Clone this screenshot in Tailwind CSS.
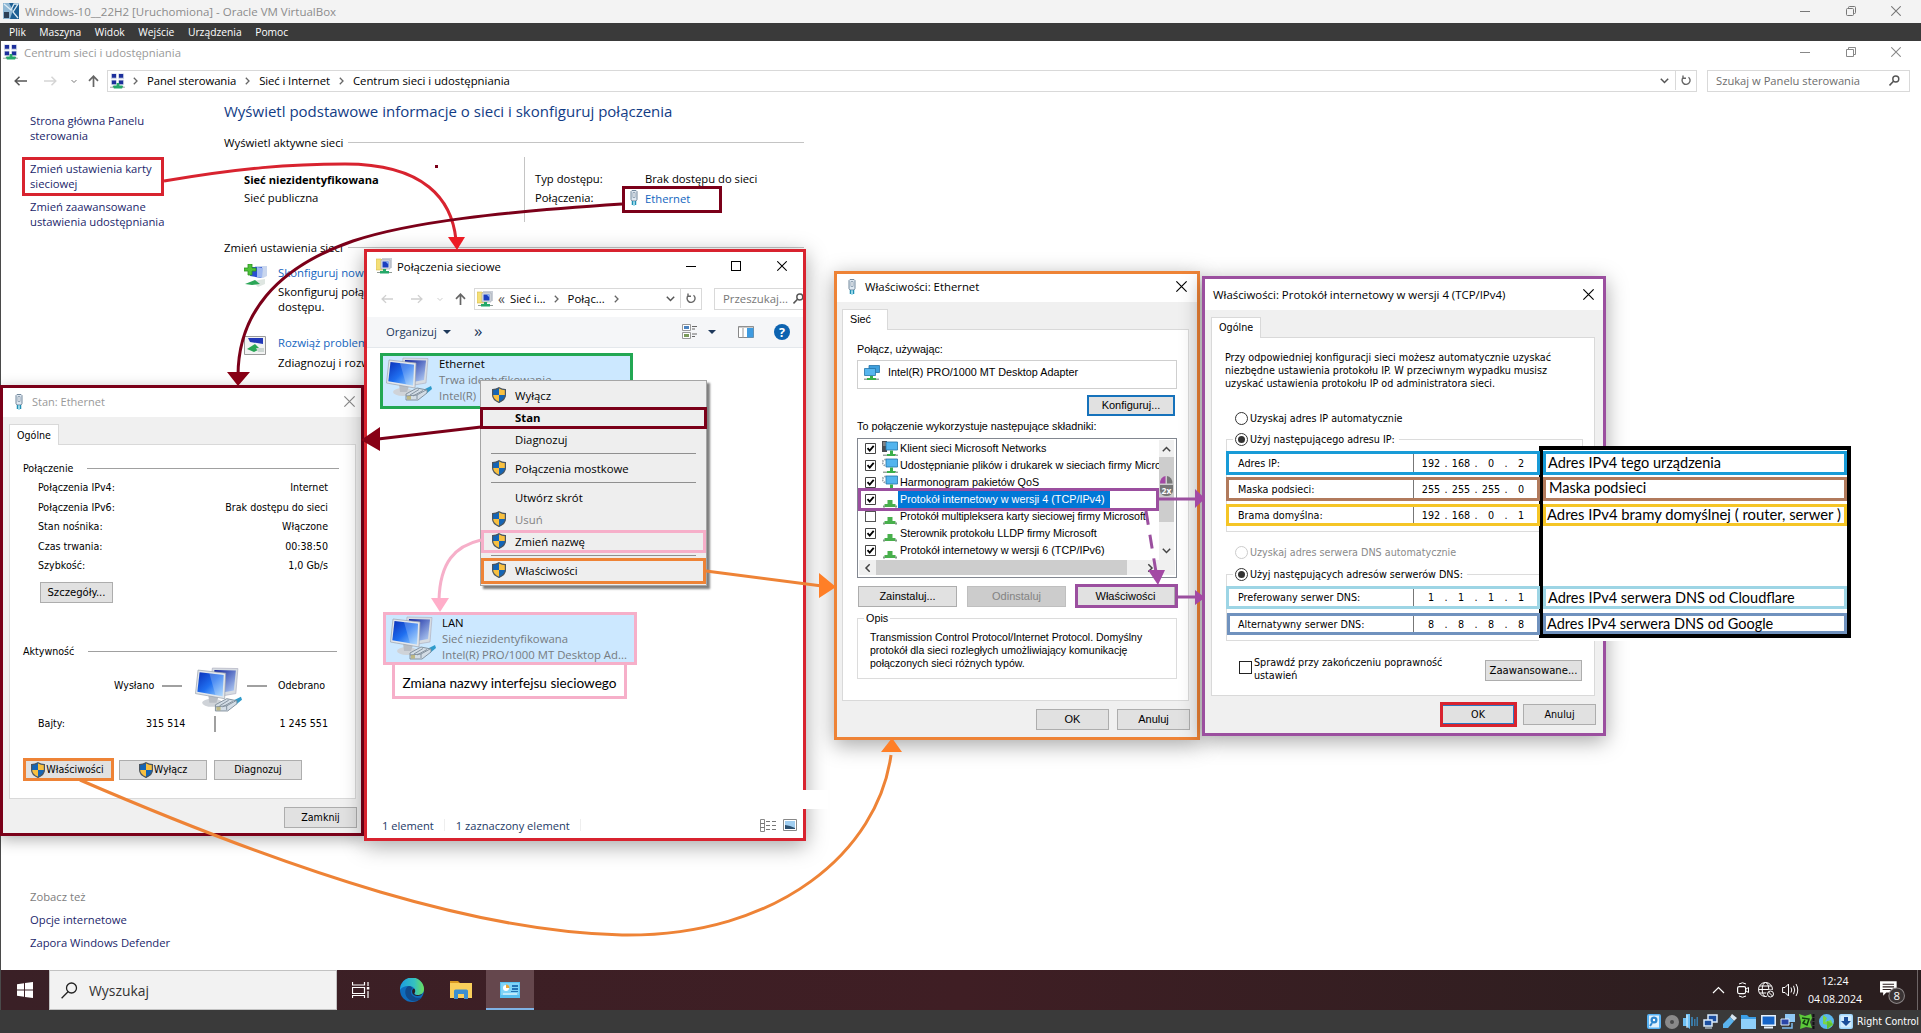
<!DOCTYPE html>
<html lang="pl">
<head>
<meta charset="utf-8">
<title>Windows-10__22H2 - Oracle VM VirtualBox</title>
<script src="https://cdn.jsdelivr.net/npm/@tailwindcss/browser@4"></script>
</head>
<body class="overflow-hidden bg-white">
<!-- Shared icon symbols -->
<svg width="0" height="0" class="absolute">
  <defs>
    <linearGradient id="scr" x1="0" y1="0" x2="1" y2="1"><stop offset="0" stop-color="#0a2fb8"/><stop offset=".5" stop-color="#1f6ff0"/><stop offset="1" stop-color="#9fd4ff"/></linearGradient>
    <linearGradient id="scr2" x1="0" y1="0" x2="1" y2="1"><stop offset="0" stop-color="#0a1d9a"/><stop offset="1" stop-color="#b9d4f8"/></linearGradient>
    <linearGradient id="edge1" x1="0" y1="0" x2="1" y2="0"><stop offset="0" stop-color="#1b9de2"/><stop offset=".6" stop-color="#35c1c0"/><stop offset="1" stop-color="#6ce05a"/></linearGradient>
  </defs>
  <symbol id="shield" viewBox="0 0 14 16">
    <path d="M7 .5C9 2 11 2.500 13.500 2.500V8C13.500 11.500 10.500 14 7 15.500C3.500 14 .5 11.500 .5 8V2.500C3 2.500 5 2 7 .5Z" fill="#f8c040"/>
    <path d="M7 .5V8H.5V2.500C3 2.500 5 2 7 .5ZM7 8H13.500C13.500 11.500 10.500 14 7 15.500Z" fill="#1565b5"/>
    <path d="M7 .7C9 2 11 2.600 13.400 2.600V8C13.400 11.400 10.500 13.900 7 15.400C3.500 13.900 .6 11.400 .6 8V2.600C3 2.600 5 2 7 .7Z" fill="none" stroke="#4a5560" stroke-width="1.200"/>
  </symbol>
  <symbol id="pc" viewBox="0 0 46 44">
    <path d="M17 1L42 1.500L40 26L28 28L15 20Z" fill="#d7dce2" stroke="#aab" stroke-width=".6"/>
    <path d="M19 3L40 3.500L38 23L27 25L18 18Z" fill="url(#scr2)"/>
    <ellipse cx="17" cy="35" rx="10" ry="4" fill="#cfd3d8"/><path d="M13 27L23 29L21 35H14Z" fill="#b8bdc4"/>
    <path d="M3 3L30 6L29 31L.5 26Z" fill="#e3e7ec" stroke="#9aa2ad" stroke-width=".7"/>
    <path d="M4.500 5L28 7.700L27 28.500L2.300 24.300Z" fill="url(#scr)"/><path d="M14 6.100L28 7.700L27 28.500L20 27.300Z" fill="#fff" opacity=".22"/>
    <path d="M37 33L45 29L46 32L40 37Z" fill="#2f9bcb"/>
    <path d="M20 37L31 31L41 33V36L32 43L20 43Z" fill="#d3dde6" stroke="#7c8a97" stroke-width=".9"/>
    <path d="M24 38L33 32.500M27 39L37 33.500M31 42V38L40 33M20 39L31 38" stroke="#7c8a97" stroke-width=".9" fill="none"/>
    <path d="M21 39h4v3.500h-4z" fill="#b5a95d" opacity=".7"/>
  </symbol>
  <symbol id="netc" viewBox="0 0 16 16">
    <path d="M1 0h6v6H1zM9 0h6v6H9zM1 7h6v5H1zM9 7h6v5H9z" fill="#cfd6e6"/>
    <path d="M2 .5h4.500v4H2zM9.500 .5h4.500v4h-4.500zM2 7.500h4.500v4H2zM9.500 7.500h4.500v4h-4.500z" fill="#1c2f9c"/>
    <path d="M7 10h3v3h4v2H3v-2h4z" fill="#2aa56b"/><path d="M0 14h16v1.500H0z" fill="#8f9a94" opacity=".6"/><path d="M4 13h9v3H4z" fill="#25a869"/>
  </symbol>
  <symbol id="plug" viewBox="0 0 8 16">
    <path d="M1 1.500L2 .5H6L7 1.500V9.500L6 11H2L1 9.500Z" fill="#dfe8f1" stroke="#73889c"/><path d="M3 2.500h2v5H3z" fill="#fff" stroke="#8195a8" stroke-width=".8"/>
    <path d="M2.500 11V15M5.500 11V15" stroke="#218fb4" stroke-width="1.500"/><path d="M4 11V16" stroke="#63c8e3"/>
  </symbol>
  <symbol id="netf" viewBox="0 0 16 16">
    <path d="M0 1h5l1 1h4v10H0z" fill="#f4df78" stroke="#d4b84a" stroke-width=".6"/>
    <path d="M6 0h10v10H6z" fill="#c9ced6"/><path d="M5 2h9v9H5z" fill="#e2e5ea" stroke="#9ca3ad" stroke-width=".6"/><path d="M6.500 3.500h6v6h-6z" fill="#1b3fc0"/><path d="M9.500 3.500h3v3z" fill="#8cb5f5"/>
    <path d="M7 11h3v2h3v2.500H4V13h3z" fill="#25a869"/><path d="M1 14h3v1H1zM13 14h3v1h-3z" fill="#8f9a94"/>
  </symbol>
  <symbol id="adp" viewBox="0 0 16 16">
    <path d="M5 .5h10.500v7H5z" fill="#3f9fdc" stroke="#2474a8" stroke-width=".8"/><path d="M.5 3.500h11v7H.5z" fill="#57b6ef" stroke="#2474a8" stroke-width=".8"/>
    <path d="M6 11h3v2h3v2H3v-2h3z" fill="#3aaf4a"/><path d="M0 13.500h3V15H0zM12 13.500h3V15h-3z" fill="#9aa5a0"/>
  </symbol>
  <symbol id="cli" viewBox="0 0 16 16">
    <path d="M0 0h5v11H0z" fill="#4a4d52"/><path d="M1 2h3M1 4h3" stroke="#bbb"/><path d="M4 1h11.500v8H4z" fill="#53b4ee" stroke="#2474a8" stroke-width=".8"/>
    <path d="M8 9.500h3V13h3v2H5v-2h3z" fill="#3aaf4a"/><path d="M1 13.500h4V15H1zM13 13.500h3V15h-3z" fill="#9aa5a0"/>
  </symbol>
  <symbol id="svc" viewBox="0 0 16 16">
    <circle cx="3.500" cy="4.500" r="3" fill="none" stroke="#9aa3ab" stroke-width="1.800" stroke-dasharray="1.600 .9"/><path d="M4 1h11.500v8H4z" fill="#53b4ee" stroke="#2474a8" stroke-width=".8"/>
    <path d="M8 9.500h3V13h3v2H5v-2h3z" fill="#3aaf4a"/><path d="M1 13.500h4V15H1zM13 13.500h3V15h-3z" fill="#9aa5a0"/>
  </symbol>
  <symbol id="prt" viewBox="0 0 14 8"><path d="M4.500 0h5v4h3v3h-11V4h3z" fill="#48b04c"/><path d="M0 5.500h2V7.500H0zM12 5.500h2V7.500h-2z" fill="#7f9a85"/></symbol>
  <symbol id="x" viewBox="0 0 10 10"><path d="M.3 .3L9.700 9.700M9.700 .3L.3 9.700" stroke="currentColor" stroke-width="1.050" fill="none"/></symbol>
  <symbol id="chr" viewBox="0 0 5 8"><path d="M.8 .8L4 4L.8 7.200" stroke="#666" stroke-width="1.300" fill="none"/></symbol>
  <symbol id="chd" viewBox="0 0 9 6"><path d="M.8 .8L4.500 4.500L8.200 .8" stroke="currentColor" stroke-width="1.500" fill="none"/></symbol>
  <symbol id="arr" viewBox="0 0 13 10"><path d="M13 5H1.500M5.500 .8L1.200 5L5.500 9.200" stroke="currentColor" stroke-width="1.500" fill="none"/></symbol>
  <symbol id="up" viewBox="0 0 11 12"><path d="M5.500 12V1.500M1 5.800L5.500 1.200L10 5.800" stroke="#666" stroke-width="1.700" fill="none"/></symbol>
  <symbol id="mag" viewBox="0 0 11 11"><circle cx="6.800" cy="4" r="3" stroke="#555" stroke-width="1.400" fill="none"/><path d="M4.500 6.300L.5 10.400" stroke="#555" stroke-width="1.600"/></symbol>
  <symbol id="ref" viewBox="0 0 10 11"><path d="M7.500 2.200A4 4 0 1 1 2.200 2.600M2 .5V3.200H5" stroke="#666" stroke-width="1.400" fill="none"/></symbol>
  <symbol id="chk" viewBox="0 0 11 11"><path d="M.5 .5h10v10H.5z" fill="#fff" stroke="#444"/><path d="M2.500 5.200L4.700 7.600L8.700 2.800" stroke="#000" stroke-width="1.800" fill="none"/></symbol>
</svg>

<div class="relative flex h-[1033px] w-[1921px] flex-col overflow-hidden bg-white font-['Open_Sans',sans-serif] text-[11.35px] leading-[15px] text-black">

  <!-- VirtualBox host window -->
  <div class="flex h-[23px] shrink-0 items-center bg-[#f3f3f3] pr-[20px] pb-px pl-[3px] text-[11.5px] text-[#8c8c8c]">
    <svg width="16" height="16" viewBox="0 0 16 16"><path d="M0 0h16v16H0z" fill="#1e5f93"/><path d="M0 0h6l4 7L7 16H0z" fill="#8fb7d4"/><path d="M1 1l7 6 3-6h4l-5 8 5 6" stroke="#dcebf5" stroke-width="1.300" fill="none"/><path d="M1 9h5v6H1z" fill="#2d3f55"/></svg>
    <span class="ml-[6px]">Windows-10__22H2 [Uruchomiona] - Oracle VM VirtualBox</span>
    <span class="ml-auto h-px w-[10px] bg-[#777]"></span>
    <svg class="ml-[36px]" width="10" height="10" viewBox="0 0 10 10"><path d="M2.500 2.500V1.500Q2.500 .5 3.500 .5H8.500Q9.500 .5 9.500 1.500V6.500Q9.500 7.500 8.500 7.500H7.500M1.500 2.500H6.500Q7.500 2.500 7.500 3.500V8.500Q7.500 9.500 6.500 9.500H1.500Q.5 9.500 .5 8.500V3.500Q.5 2.500 1.500 2.500Z" fill="none" stroke="#777"/></svg>
    <svg class="ml-[35px] text-[#777]" width="10" height="10"><use href="#x"/></svg>
  </div>
  <div class="flex h-[18px] shrink-0 items-center gap-[13.5px] bg-[#3a3a3a] pl-[9px] text-[10.3px] text-white">
    <span>Plik</span><span>Maszyna</span><span>Widok</span><span>Wejście</span><span>Urządzenia</span><span>Pomoc</span>
  </div>

  <!-- Guest: Network and Sharing Center -->
  <div class="flex min-h-0 flex-1 flex-col border-l border-[#4a4a4a]">
    <div class="flex h-[24px] items-center pr-[20px] pb-[2px] pl-[2px] text-[#9a9a9a]">
      <svg width="15" height="16"><use href="#netc"/></svg>
      <span class="ml-[6px]">Centrum sieci i udostępniania</span>
      <span class="ml-auto h-px w-[10px] bg-[#888]"></span>
      <svg class="ml-[36px]" width="10" height="10" viewBox="0 0 10 10"><path d="M2.500 2.500V.5H9.500V7.500H7.500M.5 2.500H7.500V9.500H.5Z" fill="none" stroke="#888"/></svg>
      <svg class="ml-[35px] text-[#888]" width="10" height="10"><use href="#x"/></svg>
    </div>
    <div class="mt-[5px] flex h-[22px] items-center pl-[13px]">
      <svg class="text-[#555]" width="13" height="10"><use href="#arr"/></svg>
      <svg class="ml-[17px] rotate-180 text-[#d5d5d5]" width="13" height="10"><use href="#arr"/></svg>
      <svg class="ml-[14px] text-[#777]" width="6" height="5"><use href="#chd"/></svg>
      <svg class="ml-[11px]" width="11" height="12"><use href="#up"/></svg>
      <div class="ml-[8px] flex h-[22px] w-[1590px] items-center border border-[#d9d9d9] pb-px pl-[2px]">
        <svg width="15" height="16"><use href="#netc"/></svg>
        <svg class="ml-[8px]" width="5" height="8"><use href="#chr"/></svg><span class="ml-[9px] tracking-[-0.1px]">Panel sterowania</span>
        <svg class="ml-[9px]" width="5" height="8"><use href="#chr"/></svg><span class="ml-[9px] tracking-[-0.1px]">Sieć i Internet</span>
        <svg class="ml-[9px]" width="5" height="8"><use href="#chr"/></svg><span class="ml-[9px]">Centrum sieci i udostępniania</span>
        <svg class="ml-auto text-[#555]" width="9" height="6"><use href="#chd"/></svg>
        <span class="ml-[6px] h-full w-px bg-[#d9d9d9]"></span>
        <svg class="mx-[5px]" width="10" height="11"><use href="#ref"/></svg>
      </div>
      <div class="ml-[10px] flex h-[22px] w-[203px] items-center justify-between border border-[#d9d9d9] pr-[9px] pb-px pl-[8px] text-[11.2px] text-[#6d6d6d]"><span>Szukaj w Panelu sterowania</span><svg width="11" height="11"><use href="#mag"/></svg></div>
    </div>
    <div class="flex min-h-0 flex-1">
      <nav class="flex w-[223px] shrink-0 flex-col pt-[21px] pl-[29px] text-[11.25px] text-[#1b1f6b]">
        <p>Strona główna Panelu<br>sterowania</p>
        <p class="mt-[18px]">Zmień ustawienia karty<br>sieciowej</p>
        <p class="mt-[8px]">Zmień zaawansowane<br>ustawienia udostępniania</p>
        <div class="mt-[656px] flex flex-col leading-[23px]"><span class="text-[#7d7d7d]">Zobacz też</span><span>Opcje internetowe</span><span>Zapora Windows Defender</span></div>
      </nav>
      <main class="flex w-[580px] flex-col">
        <h1 class="mt-[7px] h-[24px] text-[15px] leading-[24px] text-[#123c85]">Wyświetl podstawowe informacje o sieci i skonfiguruj połączenia</h1>
        <div class="mt-[11px] flex h-[16px] items-center gap-[5px]"><span>Wyświetl aktywne sieci</span><span class="h-px flex-1 bg-[#c4c4c4]"></span></div>
        <div class="mt-[7px] flex h-[65px]">
          <div class="w-[301px] border-r border-[#c4c4c4] pt-[15px] pl-[20px]"><p class="font-bold text-[11.15px]">Sieć niezidentyfikowana</p><p class="mt-[3px]">Sieć publiczna</p></div>
          <div class="grid grid-cols-[110px_auto] content-start gap-y-[4px] pt-[14px] pl-[10px] text-[11.25px] whitespace-nowrap"><span>Typ dostępu:</span><span>Brak dostępu do sieci</span><span>Połączenia:</span><span class="flex items-center text-[#1466c0]"><svg class="-ml-[15px] mr-[7px]" width="8" height="16"><use href="#plug"/></svg>Ethernet</span></div>
        </div>
        <div class="mt-[17px] flex h-[16px] items-center gap-[5px]"><span>Zmień ustawienia sieci</span><span class="h-px flex-1 bg-[#c4c4c4]"></span></div>
        <div class="mt-[9px] flex gap-[10px] pl-[20px]">
          <svg width="24" height="24" viewBox="0 0 24 24"><path d="M11 2h12v10l-4 2-8-2z" fill="#c9d6ee"/><path d="M6 3h12l-1 11-11-2z" fill="#2a4fd0"/><path d="M13 3l6 1-1 10-5-1z" fill="#9fb8f0"/><path d="M8 17l13-2v5l-7 3z" fill="#dfe6e2"/><path d="M1 20l10-4 5 4-8 1z" fill="#2aa556"/><path d="M4 0h4v4h4v3H8v4H4V7H0V4h4z" fill="#4fc33a" stroke="#2b8f22" stroke-width=".8"/></svg>
          <div class="whitespace-nowrap pt-[1px]"><p class="text-[#1466c0]">Skonfiguruj nowe</p><p class="mt-[4px]">Skonfiguruj połącz<br>dostępu.</p></div>
        </div>
        <div class="mt-[21px] flex gap-[12px] pl-[20px]">
          <svg class="mt-px" width="22" height="20" viewBox="0 0 22 20"><path d="M.5 .5h21v18H.5z" fill="#f2f3f3" stroke="#9a9a9a"/><path d="M4 2h15v6L6 6z" fill="#2238b8"/><path d="M3 13l8-5 5 5-6 3z" fill="#2aa556"/><path d="M12 12h8v4h-6z" fill="#cdd6d2"/></svg>
          <div class="whitespace-nowrap"><p class="text-[#1466c0]">Rozwiąż problem</p><p class="mt-[5px]">Zdiagnozuj i rozwi</p></div>
        </div>
      </main>
    </div>
  </div>

  <!-- Guest taskbar -->
  <div class="flex h-[40px] shrink-0 items-center border-l border-[#4a4a4a] bg-linear-to-r from-[#3a2026] via-[#3f1e24] to-[#2a1e1f] to-95%">
    <svg class="ml-[16px]" width="16" height="16" viewBox="0 0 16 16"><path d="M0 2.300L7 1.300V7.500H0zM8 1.100L16 0V7.500H8zM0 8.500H7V14.700L0 13.700zM8 8.500H16V16L8 14.900z" fill="#fff"/></svg>
    <div class="ml-[16px] flex h-full w-[288px] items-center border border-[#c2c2c2] bg-[#f2f2f2] pl-[11px] text-[13.9px] text-[#333]"><svg class="mr-[11px]" width="17" height="17" viewBox="0 0 17 17"><circle cx="10.500" cy="6" r="5" fill="none" stroke="#222" stroke-width="1.300"/><path d="M7 9.700L.6 16.200" stroke="#222" stroke-width="1.300"/></svg>Wyszukaj</div>
    <svg class="ml-[15px]" width="18" height="16" viewBox="0 0 18 16"><path d="M.5 0V3H12.500V0M.5 5.500H12.500V11.500H.5ZM.5 16V13.500H12.500V16" fill="none" stroke="#fff" stroke-width="1.200"/><path d="M16 0V4M16 9V16" stroke="#fff" stroke-width="1.200"/><path d="M14.800 5h2.500v2.500h-2.500z" fill="#fff"/></svg>
    <svg class="ml-[30px]" width="24" height="24" viewBox="0 0 24 24"><circle cx="12" cy="12" r="12" fill="#0f6cbd"/><path d="M0 12A12 12 0 0 1 24 11C24 15 21 17 17.500 17C14 17 14 15.500 14.800 14.500C16 11 13 8 9 8C4 8 1 10 0 12Z" fill="url(#edge1)"/><path d="M9 8C4 9.500 4 18 9 21.500C13 24.500 19 23 22 19.500C15 21 10 17 11 12.500C11.500 11 12.500 10.500 12.500 10.500C12 9 10.500 8 9 8Z" fill="#114a8b"/><path d="M14.800 14.500C14 15.500 14 17 17.500 17C19 17 21 16.500 22.500 15.500C20 19 15 18.500 12.800 16C11.500 13.500 12 11 14 10.500C15.500 12 15.500 13 14.800 14.500Z" fill="#2a1c22"/></svg>
    <svg class="ml-[26px]" width="22" height="20" viewBox="0 0 22 20"><path d="M0 1h8l2 2H0z" fill="#d99a22"/><path d="M0 3H22V18H0z" fill="#f9cf5b"/><path d="M4 11Q4 9.500 5.500 9.500H16.500Q18 9.500 18 11V19H14V14H8V19H4Z" fill="#3b8fd0"/></svg>
    <div class="ml-[14px] flex h-full w-[48px] items-center justify-center border-b-2 border-[#7fb2e5] bg-[#65474d] pt-[2px]"><svg width="20" height="16" viewBox="0 0 20 16"><path d="M0 0h20v16H0z" fill="#58bff0"/><path d="M1 1h18v12H1z" fill="#7fd3f7"/><circle cx="6" cy="6" r="3" fill="#fff"/><path d="M6 6V2.500A3.500 3.500 0 0 1 9.500 6z" fill="#e9a83a"/><path d="M12 3h6v2h-6zM12 6h6v2h-6zM11 9h7v1h-7z" fill="#2272b5"/><path d="M3 12h14" stroke="#fff"/></svg></div>
    <div class="ml-auto flex h-full items-center pr-[3px] text-[10.6px] text-white">
      <svg width="13" height="8" viewBox="0 0 13 8"><path d="M1 7L6.500 1.500L12 7" fill="none" stroke="#fff" stroke-width="1.200"/></svg>
      <svg class="ml-[12px]" width="12" height="16" viewBox="0 0 12 16"><path d="M2 2Q5.500 -.5 9 2M2 14Q5.500 16.500 9 14" fill="none" stroke="#fff"/><rect x=".6" y="4.600" width="8" height="7" rx="1.500" fill="none" stroke="#fff" stroke-width="1.200"/><path d="M9 7L11.500 5.500V10.500L9 9" fill="none" stroke="#fff"/></svg>
      <svg class="ml-[9px]" width="17" height="16" viewBox="0 0 17 16"><g fill="none" stroke="#fff"><circle cx="7.500" cy="7.500" r="7"/><ellipse cx="7.500" cy="7.500" rx="3.300" ry="7"/><path d="M.5 7.500h14M1.500 4h12M1.500 11h12"/></g><circle cx="12.500" cy="12" r="4.500" fill="#2a1e1f"/><circle cx="12.500" cy="12" r="3" fill="none" stroke="#fff"/><path d="M10.500 10l4 4" stroke="#fff"/></svg>
      <svg class="ml-[7px]" width="17" height="14" viewBox="0 0 17 14"><path d="M.6 4.500H3L6.500 1V13L3 9.500H.6Z" fill="none" stroke="#fff"/><path d="M9 4.500Q10.500 7 9 9.500M11.500 2.800Q14 7 11.500 11.200M14 1Q17.500 7 14 13" fill="none" stroke="#fff"/></svg>
      <div class="ml-[8px] w-[56px] text-center leading-[18px]">12:24<br>04.08.2024</div>
      <svg class="ml-[16px]" width="27" height="27" viewBox="0 0 26 26"><path d="M1 4H17V15H7L4 18V15H1Z" fill="#fff"/><path d="M3.500 7h11M3.500 9.500h11M3.500 12h8" stroke="#2a1e1f"/><circle cx="17" cy="18" r="7.500" fill="#3a3334" stroke="#8b8586"/><text x="17" y="22" text-anchor="middle" font-size="11" fill="#fff" font-family="Open Sans">8</text></svg>
      <span class="ml-[11px] h-full w-px bg-[#6e6566]"></span>
    </div>
  </div>

  <!-- VirtualBox status bar -->
  <div class="flex h-[23px] shrink-0 items-center justify-end gap-[4.3px] bg-[#3a3a3a] pr-[2px] font-['DejaVu_Sans',sans-serif] text-white">
    <svg width="14" height="15" viewBox="0 0 14 15"><rect width="14" height="15" rx="2" fill="#56b1f2"/><rect x="2" y="1.500" width="10" height="12" fill="#dff1fd"/><circle cx="7" cy="6" r="3.500" fill="#2d86cf"/><circle cx="7" cy="6" r="1.200" fill="#fff"/><path d="M5 9l-2 3" stroke="#2d86cf" stroke-width="2"/></svg>
    <svg width="14" height="14" viewBox="0 0 14 14"><circle cx="7" cy="7" r="7" fill="#8a8a8a"/><circle cx="7" cy="7" r="2" fill="#4a4a4a"/></svg>
    <svg width="15" height="15" viewBox="0 0 15 15"><path d="M0 4h3V0l4 0v15L3 12H0z" fill="#6ec1f5"/><path d="M4 1v13" stroke="#e7f6ff"/><path d="M8 3h2v9H8zM11 5h1.500v7H11zM13.500 3H15v9h-1.500z" fill="#3a7ba8"/></svg>
    <svg width="15" height="15" viewBox="0 0 15 15"><path d="M5 1h9v7H5z" fill="#1c4fa0" stroke="#d9ecfb" stroke-width="1.500"/><path d="M1 6h8v6H1z" fill="#1c4fa0" stroke="#d9ecfb" stroke-width="1.500"/><path d="M2 14h7" stroke="#d9ecfb"/></svg>
    <svg width="15" height="15" viewBox="0 0 15 15"><path d="M10 0l5 4-3 3-4-4z" fill="#d7e6f0"/><path d="M8 3l4 4-6 7H1V10z" fill="#5bb4ee"/></svg>
    <svg width="15" height="14" viewBox="0 0 15 14"><path d="M0 0h6l2 2h7v12H0z" fill="#3b9fe6"/><path d="M0 4h15v10H0z" fill="#8fd0fa"/></svg>
    <svg width="15" height="14" viewBox="0 0 15 14"><path d="M.8 .8h13.400v9.400H.8z" fill="#1565c8" stroke="#e6f3fd" stroke-width="1.500"/><path d="M3 12.500h9" stroke="#e6f3fd" stroke-width="2"/></svg>
    <svg width="15" height="15" viewBox="0 0 15 15"><path d="M5 0h10v8H5z" fill="#8fc9f5"/><path d="M1 5h8v6H1z" fill="#2a45a8" stroke="#d9ecfb"/><path d="M2 14h10V9" stroke="#7fbdf0" stroke-width="1.500" fill="none"/></svg>
    <svg width="16" height="15" viewBox="0 0 16 15"><path d="M0 0l6 2 6-2 1 4-2 4 2 6-6-1-6 2 1-7z" fill="#5cc93a"/><path d="M3 4l7 1-2 6-4-2 2-3" stroke="#123f10" stroke-width="1.500" fill="none"/><path d="M14.500 0V15" stroke="#111" stroke-width="2" stroke-dasharray="3 1"/></svg>
    <svg width="15" height="15" viewBox="0 0 15 15"><circle cx="7.500" cy="7.500" r="7.500" fill="#5ab7ee"/><path d="M4 1l4 3-2 4 6-2 2 5-6 4 1-4-5-1z" fill="#7ad64a"/><path d="M8 7v8l6-5z" fill="#5fc236"/></svg>
    <svg width="14" height="15" viewBox="0 0 14 15"><rect width="14" height="15" rx="2" fill="#9fd6fb"/><rect x="1.500" y="1.500" width="11" height="12" fill="#d2ecfd"/><path d="M5 3h4v4h3l-5 5-5-5h3z" fill="#1c4f9a"/></svg>
    <span class="font-['DejaVu_Sans_Condensed','DejaVu_Sans',sans-serif] text-[10.5px]">Right Control</span>
  </div>

  <!-- Window: Stan: Ethernet -->
  <section class="absolute top-[385px] left-0 flex h-[451px] w-[364px] flex-col border-[3px] border-[#7b0019] bg-[#f0f0f0] font-['DejaVu_Sans_Condensed','DejaVu_Sans',sans-serif] text-[10.6px] shadow-[0_4px_14px_rgba(0,0,0,0.3)]">
    <div class="flex h-[29px] items-center bg-white pr-[6px] pb-[2px] pl-[12px] font-['Open_Sans',sans-serif] text-[11px] text-[#999]"><svg width="8" height="16"><use href="#plug"/></svg><span class="ml-[9px]">Stan: Ethernet</span><svg class="ml-auto text-[#888]" width="11" height="11"><use href="#x"/></svg></div>
    <div class="z-10 -mb-px mt-[7px] ml-[6px] flex h-[21px] w-[50px] items-center border border-b-0 border-[#d9d9d9] bg-white pl-[7px]">Ogólne</div>
    <div class="ml-[6px] flex h-[355px] w-[347px] flex-col border border-[#d9d9d9] bg-white pt-[15px] pl-[13px]">
      <div class="flex h-[16px] items-center"><span class="w-[64px]">Połączenie</span><span class="h-px w-[252px] bg-[#a0a0a0]"></span></div>
      <dl class="mt-[2px] ml-[15px] grid w-[290px] grid-cols-[auto_auto] justify-between leading-[19.6px]">
        <dt>Połączenia IPv4:</dt><dd class="text-right">Internet</dd>
        <dt>Połączenia IPv6:</dt><dd class="text-right">Brak dostępu do sieci</dd>
        <dt>Stan nośnika:</dt><dd class="text-right">Włączone</dd>
        <dt>Czas trwania:</dt><dd class="text-right">00:38:50</dd>
        <dt>Szybkość:</dt><dd class="text-right">1,0 Gb/s</dd>
      </dl>
      <div class="mt-[6px] ml-[17px] flex h-[21px] w-[73px] items-center justify-center border border-[#adadad] bg-[#e1e1e1] text-[11.2px]">Szczegóły...</div>
      <div class="mt-[41px] flex h-[16px] items-center"><span class="w-[65px]">Aktywność</span><span class="h-px w-[249px] bg-[#a0a0a0]"></span></div>
      <div class="mt-[7px] ml-[91px] flex h-[45px] items-start">
        <span class="mt-[11px] w-[48px]">Wysłano</span><span class="mt-[18px] h-[2px] w-[20px] bg-[#a0a0a0]"></span><svg class="ml-[13px]" width="47" height="45"><use href="#pc"/></svg><span class="mt-[18px] ml-[5px] h-[2px] w-[20px] bg-[#a0a0a0]"></span><span class="mt-[11px] ml-[11px]">Odebrano</span>
      </div>
      <div class="mt-[4px] ml-[15px] flex h-[16px] w-[290px] items-center"><span class="w-[108px]">Bajty:</span><span class="w-[60px]">315 514</span><span class="ml-[8px] h-[16px] w-[2px] bg-[#a0a0a0]"></span><span class="ml-auto">1 245 551</span></div>
      <div class="mt-[27px] flex h-[21px] gap-[7px] pt-px">
        <div class="flex w-[89px] items-center justify-center gap-px border border-[#adadad] bg-[#e1e1e1]"><svg width="14" height="16"><use href="#shield"/></svg>Właściwości</div>
        <div class="flex w-[88px] items-center justify-center gap-px border border-[#adadad] bg-[#e1e1e1]"><svg width="14" height="16"><use href="#shield"/></svg>Wyłącz</div>
        <div class="flex w-[88px] items-center justify-center border border-[#adadad] bg-[#e1e1e1]">Diagnozuj</div>
      </div>
    </div>
    <div class="mt-[8px] mr-[4px] flex h-[21px] w-[73px] items-center justify-center self-end border border-[#adadad] bg-[#e1e1e1]">Zamknij</div>
  </section>

  <!-- Window: Połączenia sieciowe -->
  <section class="absolute top-[249px] left-[364px] flex h-[592px] w-[442px] flex-col border-[3px] border-[#d8232f] bg-white shadow-[0_5px_20px_rgba(0,0,0,0.35)]">
    <div class="flex h-[30px] items-center pr-[16px] pb-[2px] pl-[9px]"><svg width="16" height="16"><use href="#netf"/></svg><span class="ml-[5px]">Połączenia sieciowe</span><span class="ml-auto h-px w-[10px] bg-black"></span><span class="ml-[35px] h-[10px] w-[10px] border border-black"></span><svg class="ml-[36px]" width="10" height="10"><use href="#x"/></svg></div>
    <div class="mt-[6px] flex h-[22px] items-center overflow-hidden pl-[14px]">
      <svg class="shrink-0 text-[#d0d0d0]" width="12" height="10"><use href="#arr"/></svg><svg class="ml-[18px] shrink-0 rotate-180 text-[#d0d0d0]" width="12" height="10"><use href="#arr"/></svg><svg class="ml-[14px] shrink-0 text-[#ccc]" width="6" height="5"><use href="#chd"/></svg><svg class="ml-[12px] shrink-0" width="11" height="12"><use href="#up"/></svg>
      <div class="ml-[8px] flex h-[22px] w-[228px] shrink-0 items-center border border-[#d9d9d9] pb-px pl-[2px]"><svg width="16" height="16"><use href="#netf"/></svg><span class="ml-[5px] text-[14px] text-[#555]">«</span><span class="ml-[5px]">Sieć i...</span><svg class="ml-[8px]" width="5" height="8"><use href="#chr"/></svg><span class="ml-[9px]">Połąc...</span><svg class="ml-[9px]" width="5" height="8"><use href="#chr"/></svg><svg class="ml-auto text-[#555]" width="9" height="6"><use href="#chd"/></svg><span class="ml-[5px] h-full w-px bg-[#d9d9d9]"></span><svg class="mx-[5px]" width="10" height="11"><use href="#ref"/></svg></div>
      <div class="ml-[12px] flex h-[22px] w-[100px] shrink-0 items-center border border-[#d9d9d9] pb-px pl-[8px] text-[#777]"><span>Przeszukaj...</span><svg class="ml-[5px] shrink-0" width="11" height="11"><use href="#mag"/></svg></div>
    </div>
    <div class="mt-[7px] flex h-[31px] items-center border-b border-[#e4e8ec] bg-[#f5f6f8] pr-[13px] pb-px pl-[19px] text-[#1e395b]"><span>Organizuj</span><span class="ml-[6px] border-x-4 border-t-4 border-x-transparent border-t-[#1e395b]"></span><span class="ml-[23px] pb-[2px] text-[17px]">»</span>
      <svg class="ml-auto" width="15" height="15" viewBox="0 0 15 15"><path d="M.5 .5h8v6h-8zM.5 8.500h8v6h-8z" fill="#fff" stroke="#999"/><path d="M2 2h5v3H2z" fill="#4b83c0"/><path d="M2 10h5v3H2z" fill="#7a9a5a"/><path d="M10 2.500h5M10 5h3M10 10h5M10 12.500h3" stroke="#666"/></svg>
      <span class="ml-[11px] border-x-4 border-t-4 border-x-transparent border-t-[#1e395b]"></span>
      <svg class="ml-[22px]" width="16" height="12" viewBox="0 0 16 12"><path d="M.5 .5h15v11H.5z" fill="#fff" stroke="#888"/><path d="M.5 1h15M5 2v10" stroke="#999"/><path d="M9 2h6.500v9.500H9z" fill="#3f9be0"/></svg>
      <svg class="ml-[20px]" width="16" height="16" viewBox="0 0 16 16"><circle cx="8" cy="8" r="8" fill="#0d63b0"/><text x="8" y="12.500" text-anchor="middle" font-size="12.500" font-weight="bold" fill="#fff" font-family="Open Sans">?</text></svg>
    </div>
    <div class="relative flex flex-1 flex-col">
      <div class="mt-[5px] ml-[13px] flex h-[56px] w-[253px] items-start border-[3px] border-[#22a753] bg-[#cce8ff] pl-[3px] pt-px"><svg class="shrink-0" width="46" height="44"><use href="#pc"/></svg><div class="-mt-px ml-[7px] leading-[16px] text-[#767b80]"><p class="text-black">Ethernet</p><p>Trwa identyfikowanie</p><p>Intel(R)</p></div></div>
      <div class="mt-[203px] ml-[16px] flex h-[53px] w-[254px] items-start border-[3px] border-[#f6afc9] bg-[#cce8ff] pl-[4px]"><svg class="mt-px shrink-0" width="46" height="44"><use href="#pc"/></svg><div class="ml-[6px] whitespace-nowrap leading-[16px] text-[#767b80]"><p class="text-black">LAN</p><p>Sieć niezidentyfikowana</p><p>Intel(R) PRO/1000 MT Desktop Ad...</p></div></div>
      <div class="ml-[25px] -mt-[3px] flex h-[37px] w-[235px] items-center justify-center border-[3px] border-[#f6afc9] bg-white pt-[6px] font-['Lato',sans-serif] text-[13.6px]">Zmiana nazwy interfejsu sieciowego</div>
      <div class="mt-auto mb-[2px] flex h-[22px] items-center pr-[6px] pl-[15px] text-[11.12px] text-[#243a66]"><span>1 element</span><span class="ml-[10px] h-[12px] w-px bg-[#eee]"></span><span class="ml-[11px]">1 zaznaczony element</span><span class="ml-[10px] h-[12px] w-px bg-[#eee]"></span>
        <svg class="ml-auto" width="16" height="13" viewBox="0 0 16 13"><path d="M.5 .5h4v12h-4z" fill="none" stroke="#888"/><path d="M.5 4.500h4M.5 8.500h4M6 2.500h4M12 2.500h4M6 6.500h4M12 6.500h4M6 10.500h4M12 10.500h4" stroke="#777"/></svg>
        <svg class="ml-[7px]" width="14" height="12" viewBox="0 0 14 12"><path d="M.5 .5h13v11H.5z" fill="#fff" stroke="#888"/><path d="M2 2h10v8H2z" fill="#9fcdf0"/><path d="M2 6l5 1 5 2v1H2z" fill="#2b4f6f"/></svg>
      </div>
    </div>
  </section>
  <div class="absolute top-[790px] left-[803px] h-[19px] w-[25px] bg-white"></div>

  <!-- Context menu -->
  <div class="absolute top-[380px] left-[480px] flex h-[206px] w-[227px] flex-col border border-[#a5a5a5] bg-[#eee] pt-[3px] shadow-[3px_3px_2px_rgba(0,0,0,0.5)]">
    <div class="flex h-[22px] items-center pl-[11px]"><svg class="mr-[9px]" width="14" height="16"><use href="#shield"/></svg>Wyłącz</div>
    <div class="flex h-[22px] items-center pl-[34px] font-bold">Stan</div>
    <div class="flex h-[22px] items-center pl-[34px]">Diagnozuj</div>
    <div class="mx-[10px] my-[3px] h-px bg-[#8f8f8f]"></div>
    <div class="flex h-[22px] items-center pl-[11px]"><svg class="mr-[9px]" width="14" height="16"><use href="#shield"/></svg>Połączenia mostkowe</div>
    <div class="mx-[10px] my-[3px] h-px bg-[#8f8f8f]"></div>
    <div class="flex h-[22px] items-center pl-[34px]">Utwórz skrót</div>
    <div class="flex h-[22px] items-center pl-[11px] text-[#838383]"><svg class="mr-[9px]" width="14" height="16"><use href="#shield"/></svg>Usuń</div>
    <div class="flex h-[22px] items-center pl-[11px]"><svg class="mr-[9px]" width="14" height="16"><use href="#shield"/></svg>Zmień nazwę</div>
    <div class="mx-[10px] my-[3px] h-px bg-[#8f8f8f]"></div>
    <div class="flex h-[22px] items-center pl-[11px]"><svg class="mr-[9px]" width="14" height="16"><use href="#shield"/></svg>Właściwości</div>
  </div>

  <!-- Window: Właściwości: Ethernet -->
  <section class="absolute top-[271px] left-[834px] flex h-[469px] w-[366px] flex-col border-[3px] border-[#ee8336] bg-[#f0f0f0] font-['Liberation_Sans',Arial,sans-serif] text-[10.8px] leading-[13px] shadow-[0_5px_20px_rgba(0,0,0,0.35)]">
    <div class="flex h-[28px] items-center bg-white pr-[10px] pb-[3px] pl-[11px] font-['Open_Sans',sans-serif] text-[11.35px]"><svg width="8" height="16"><use href="#plug"/></svg><span class="ml-[9px]">Właściwości: Ethernet</span><svg class="ml-auto" width="11" height="11"><use href="#x"/></svg></div>
    <div class="z-10 -mb-px mt-[7px] ml-[5px] flex h-[21px] w-[46px] items-center border border-b-0 border-[#d9d9d9] bg-white pb-[2px] pl-[7px]">Sieć</div>
    <div class="ml-[5px] flex h-[372px] w-[347px] flex-col border border-[#d9d9d9] bg-white pt-[11px] pr-[11px] pl-[14px]">
      <div class="flex h-[16px] items-center">Połącz, używając:</div>
      <div class="mt-[3px] flex h-[29px] items-start border border-[#cfcfcf] pt-[4px] pl-[6px]"><svg width="16" height="16"><use href="#adp"/></svg><span class="mt-px ml-[8px]">Intel(R) PRO/1000 MT Desktop Adapter</span></div>
      <div class="mt-[6px] mr-[2px] flex h-[21px] w-[88px] items-center justify-center self-end border-2 border-[#1672bb] bg-[#e1e1e1] text-[11px]">Konfiguruj...</div>
      <div class="mt-[2px] flex h-[16px] items-center">To połączenie wykorzystuje następujące składniki:</div>
      <div class="mt-[4px] flex h-[140px] flex-col border border-[#828790] whitespace-nowrap">
        <div class="flex h-[121px] pt-px">
          <div class="flex w-[301px] flex-col overflow-hidden pl-[7px]">
            <div class="flex h-[17px] shrink-0 items-center"><svg class="shrink-0" width="11" height="11"><use href="#chk"/></svg><svg class="mx-[6px] shrink-0" width="16" height="16"><use href="#cli"/></svg><span class="-ml-[4px]">Klient sieci Microsoft Networks</span></div>
            <div class="flex h-[17px] shrink-0 items-center"><svg class="shrink-0" width="11" height="11"><use href="#chk"/></svg><svg class="mx-[6px] shrink-0" width="16" height="16"><use href="#svc"/></svg><span class="-ml-[4px]">Udostępnianie plików i drukarek w sieciach firmy Micros</span></div>
            <div class="flex h-[17px] shrink-0 items-center"><svg class="shrink-0" width="11" height="11"><use href="#chk"/></svg><svg class="mx-[6px] shrink-0" width="16" height="16"><use href="#svc"/></svg><span class="-ml-[4px]">Harmonogram pakietów QoS</span></div>
            <div class="flex h-[17px] shrink-0 items-center"><svg class="shrink-0" width="11" height="11"><use href="#chk"/></svg><svg class="mt-[8px] mr-px ml-[7px] shrink-0" width="14" height="8"><use href="#prt"/></svg><span class="flex h-[17px] w-[212px] items-center bg-[#0078d7] pl-[2px] text-white">Protokół internetowy w wersji 4 (TCP/IPv4)</span></div>
            <div class="flex h-[17px] shrink-0 items-center text-[10.7px]"><span class="h-[11px] w-[11px] shrink-0 border border-[#555] bg-white"></span><svg class="mt-[8px] mr-[3px] ml-[7px] shrink-0" width="14" height="8"><use href="#prt"/></svg><span class="tracking-[-0.08px]">Protokół multipleksera karty sieciowej firmy Microsoft</span></div>
            <div class="flex h-[17px] shrink-0 items-center"><svg class="shrink-0" width="11" height="11"><use href="#chk"/></svg><svg class="mt-[8px] mr-[3px] ml-[7px] shrink-0" width="14" height="8"><use href="#prt"/></svg><span class="tracking-[-0.03px]">Sterownik protokołu LLDP firmy Microsoft</span></div>
            <div class="flex h-[17px] shrink-0 items-center"><svg class="shrink-0" width="11" height="11"><use href="#chk"/></svg><svg class="mt-[8px] mr-[3px] ml-[7px] shrink-0" width="14" height="8"><use href="#prt"/></svg>Protokół internetowy w wersji 6 (TCP/IPv6)</div>
          </div>
          <div class="flex w-[15px] flex-col items-center bg-[#f0f0f0] pt-[6px] text-[#444]"><svg class="rotate-180" width="9" height="6"><use href="#chd"/></svg><span class="mt-[5px] h-[65px] w-full bg-[#cdcdcd]"></span><svg class="mt-[26px]" width="9" height="6"><use href="#chd"/></svg></div>
        </div>
        <div class="mx-px flex h-[15px] items-center bg-[#f0f0f0] pl-[4px] text-[#444]"><svg class="rotate-90" width="9" height="6"><use href="#chd"/></svg><span class="ml-[4px] h-full w-[251px] bg-[#cdcdcd]"></span><svg class="ml-[19px] -rotate-90" width="9" height="6"><use href="#chd"/></svg></div>
      </div>
      <div class="mt-[8px] ml-px flex h-[21px] gap-[10px] text-[11px]"><div class="flex w-[99px] items-center justify-center border border-[#adadad] bg-[#e1e1e1]">Zainstaluj...</div><div class="flex w-[99px] items-center justify-center border border-[#bfbfbf] bg-[#cccccc] text-[#838383]">Odinstaluj</div><div class="flex w-[99px] items-center justify-center border border-[#adadad] bg-[#e1e1e1]">Właściwości</div></div>
      <div class="relative mt-[11px] h-[61px] border border-[#dcdcdc] pt-[12px] pl-[12px] text-[10.5px] whitespace-nowrap"><span class="absolute -top-[7px] left-[6px] bg-white px-[2px] text-[10.8px]">Opis</span>Transmission Control Protocol/Internet Protocol. Domyślny<br>protokół dla sieci rozległych umożliwiający komunikację<br>połączonych sieci różnych typów.</div>
    </div>
    <div class="mt-[8px] mr-[7px] flex h-[21px] justify-end gap-[8px] text-[11px]"><div class="flex w-[73px] items-center justify-center border border-[#adadad] bg-[#e1e1e1]">OK</div><div class="flex w-[73px] items-center justify-center border border-[#adadad] bg-[#e1e1e1]">Anuluj</div></div>
  </section>

  <!-- Window: TCP/IPv4 -->
  <section class="absolute top-[276px] left-[1202px] flex h-[460px] w-[404px] flex-col border-[3px] border-[#9b4f9f] bg-[#f0f0f0] font-['DejaVu_Sans_Condensed','DejaVu_Sans',sans-serif] text-[10.7px] leading-[13px] shadow-[0_5px_20px_rgba(0,0,0,0.35)]">
    <div class="flex h-[31px] items-center bg-white pr-[9px] pb-px pl-[8px] font-['Open_Sans',sans-serif] text-[11.4px]">Właściwości: Protokół internetowy w wersji 4 (TCP/IPv4)<svg class="ml-auto" width="11" height="11"><use href="#x"/></svg></div>
    <div class="z-10 -mb-px mt-[7px] ml-[6px] flex h-[21px] w-[50px] items-center border border-b-0 border-[#d9d9d9] bg-white pb-[2px] pl-[7px]">Ogólne</div>
    <div class="ml-[6px] flex h-[359px] w-[384px] flex-col border border-[#d9d9d9] bg-white pt-[13px] pl-[14px]">
      <p class="-ml-px whitespace-nowrap">Przy odpowiedniej konfiguracji sieci możesz automatycznie uzyskać<br>niezbędne ustawienia protokołu IP. W przeciwnym wypadku musisz<br>uzyskać ustawienia protokołu IP od administratora sieci.</p>
      <div class="mt-[20px] ml-[9px] flex h-[16px] items-center gap-[2px]"><span class="h-[13px] w-[13px] rounded-full border border-[#333]"></span>Uzyskaj adres IP automatycznie</div>
      <div class="mt-[5px] flex h-[16px] w-[357px] items-center gap-[2px]"><span class="h-px w-[7px] bg-[#dcdcdc]"></span><span class="flex h-[13px] w-[13px] items-center justify-center rounded-full border border-[#333]"><span class="h-[7px] w-[7px] rounded-full bg-[#333]"></span></span>Użyj następującego adresu IP:<span class="ml-[2px] h-px flex-1 bg-[#dcdcdc]"></span></div>
      <div class="-mt-[8px] h-[93px] w-[357px] border-x border-b border-[#dcdcdc]"></div>
      <div class="z-10 -mt-[81px] flex h-[24px] w-[314px] items-center border-[3px] border-[#189bd7] bg-white pl-[9px]"><span class="w-[175px]">Adres IP:</span><span class="mr-[2px] h-full w-px bg-[#777]"></span><span class="grid grid-cols-[30px_0px_30px_0px_30px_0px_30px] justify-items-center"><b class="font-normal">192</b><b class="font-normal">.</b><b class="font-normal">168</b><b class="font-normal">.</b><b class="font-normal">0</b><b class="font-normal">.</b><b class="font-normal">2</b></span></div>
      <div class="z-10 mt-[2px] flex h-[24px] w-[314px] items-center border-[3px] border-[#b17a5c] bg-white pl-[9px]"><span class="w-[175px]">Maska podsieci:</span><span class="mr-[2px] h-full w-px bg-[#777]"></span><span class="grid grid-cols-[30px_0px_30px_0px_30px_0px_30px] justify-items-center"><b class="font-normal">255</b><b class="font-normal">.</b><b class="font-normal">255</b><b class="font-normal">.</b><b class="font-normal">255</b><b class="font-normal">.</b><b class="font-normal">0</b></span></div>
      <div class="z-10 mt-[3px] flex h-[22px] w-[314px] items-center border-[3px] border-[#f5c526] bg-white pl-[9px]"><span class="w-[175px]">Brama domyślna:</span><span class="mr-[2px] h-full w-px bg-[#777]"></span><span class="grid grid-cols-[30px_0px_30px_0px_30px_0px_30px] justify-items-center"><b class="font-normal">192</b><b class="font-normal">.</b><b class="font-normal">168</b><b class="font-normal">.</b><b class="font-normal">0</b><b class="font-normal">.</b><b class="font-normal">1</b></span></div>
      <div class="mt-[18px] ml-[9px] flex h-[16px] items-center gap-[2px] text-[#8a8a8a]"><span class="h-[13px] w-[13px] rounded-full border border-[#ccc]"></span>Uzyskaj adres serwera DNS automatycznie</div>
      <div class="mt-[6px] flex h-[16px] w-[357px] items-center gap-[2px]"><span class="h-px w-[7px] bg-[#dcdcdc]"></span><span class="flex h-[13px] w-[13px] items-center justify-center rounded-full border border-[#333]"><span class="h-[7px] w-[7px] rounded-full bg-[#333]"></span></span>Użyj następujących adresów serwerów DNS:<span class="ml-[2px] h-px flex-1 bg-[#dcdcdc]"></span></div>
      <div class="-mt-[8px] h-[67px] w-[357px] border-x border-b border-[#dcdcdc]"></div>
      <div class="z-10 -mt-[55px] flex h-[23px] w-[314px] items-center border-[3px] border-[#9dd5e5] bg-white pl-[9px]"><span class="w-[175px]">Preferowany serwer DNS:</span><span class="mr-[2px] h-full w-px bg-[#777]"></span><span class="grid grid-cols-[30px_0px_30px_0px_30px_0px_30px] justify-items-center"><b class="font-normal">1</b><b class="font-normal">.</b><b class="font-normal">1</b><b class="font-normal">.</b><b class="font-normal">1</b><b class="font-normal">.</b><b class="font-normal">1</b></span></div>
      <div class="z-10 mt-[4px] ml-px flex h-[22px] w-[313px] items-center border-[3px] border-[#7092be] bg-white pl-[8px]"><span class="w-[175px]">Alternatywny serwer DNS:</span><span class="mr-[2px] h-full w-px bg-[#777]"></span><span class="grid grid-cols-[30px_0px_30px_0px_30px_0px_30px] justify-items-center"><b class="font-normal">8</b><b class="font-normal">.</b><b class="font-normal">8</b><b class="font-normal">.</b><b class="font-normal">8</b><b class="font-normal">.</b><b class="font-normal">8</b></span></div>
      <div class="mt-[21px] ml-[13px] flex items-start"><span class="mt-[5px] h-[13px] w-[13px] border border-[#222]"></span><p class="ml-[2px] w-[231px]">Sprawdź przy zakończeniu poprawność<br>ustawień</p><div class="mt-[4px] flex h-[21px] w-[97px] items-center justify-center border border-[#adadad] bg-[#e1e1e1] text-[11.200px]">Zaawansowane...</div></div>
    </div>
    <div class="mt-[8px] mr-[7px] flex h-[21px] justify-end gap-[8px]"><div class="flex w-[74px] items-center justify-center border-2 border-[#2b78c0] bg-[#e1e1e1]">OK</div><div class="flex w-[73px] items-center justify-center border border-[#adadad] bg-[#e1e1e1]">Anuluj</div></div>
  </section>

  <!-- Legend of address fields -->
  <div class="absolute top-[446px] left-[1539px] flex h-[192px] w-[312px] flex-col border-[4px] border-black bg-white pt-px font-['Lato',sans-serif] text-[14.5px] shadow-[0_3px_0_#fff] whitespace-nowrap">
    <div class="flex h-[24px] items-center border-[3px] border-[#189bd7] pb-[2px] pl-[2px]">Adres IPv4 tego urządzenia</div>
    <div class="mt-[2px] flex h-[24px] items-center border-[3px] border-[#b17a5c] pb-[3px] pl-[3px]">Maska podsieci</div>
    <div class="mt-[3px] flex h-[22px] items-center border-[3px] border-[#f5c526] pb-[2px] pl-[1px] text-[14.8px]">Adres IPv4 bramy domyślnej ( router, serwer )</div>
    <div class="mt-[60px] flex h-[23px] items-center border-[3px] border-[#9dd5e5] pl-[2px]">Adres IPv4 serwera DNS od Cloudflare</div>
    <div class="mt-[4px] flex h-[21px] items-center border-[3px] border-[#7092be] pb-px pl-[1px]">Adres IPv4 serwera DNS od Google</div>
  </div>

  <!-- Annotation boxes and arrows -->
  <svg class="absolute top-0 left-0" width="1921" height="1033" viewBox="0 0 1921 1033" fill="none" stroke-width="3">
    <g stroke="#d8232f"><rect x="23.500" y="158.500" width="139" height="36"/><path d="M164 181C240 168 290 164 345 164C425 164 452 200 456 240"/><rect x="1441.500" y="703.500" width="74" height="22"/></g>
    <path d="M448 237H465L457 250Z" fill="#ed1c24"/>
    <path d="M435 165h3v3h-3z" fill="#7b0019"/>
    <g stroke="#7b0019"><rect x="623.500" y="187.500" width="97" height="24"/><path d="M622 204C500 212 410 222 353 241C275 268 238 315 238 376"/><rect x="481.500" y="408.500" width="224" height="19"/><path d="M481 427L378 439"/></g>
    <path d="M227 372H250L238 386ZM380 427V451L361 440Z" fill="#880015"/>
    <g stroke="#f6afc9"><rect x="482.500" y="531.500" width="222" height="20"/><path d="M481 540C455 546 440 562 439 600"/></g>
    <path d="M431 598H449L440 612Z" fill="#ffaec9"/>
    <g stroke="#ee8336"><rect x="482.500" y="559.500" width="222" height="23"/><path d="M706 571L822 586"/><rect x="24.500" y="759.500" width="88" height="20"/><path d="M80 780C300 875 480 932 622 935C780 937 878 850 891 755"/></g>
    <path d="M819 573V598L836 587ZM881 752H902L892 738Z" fill="#ff7f27"/>
    <g stroke="#9b4f9f"><rect x="859.500" y="489.500" width="298" height="20"/><rect x="1076.500" y="585.500" width="100" height="21"/><path d="M1159 499H1197M1178 597H1197"/><path d="M1146 511L1156 572" stroke-dasharray="14 10"/></g>
    <path d="M1195 489V508L1205 498.500ZM1195 590V605L1205 597.500ZM1148 570H1165L1158 585Z" fill="#a349a4"/>
    <!-- Double-click mouse badge -->
    <path d="M1160 483.500A6 7 0 0 1 1165.500 476V483.500Z" fill="#a349a4"/><path d="M1167 476A6 7 0 0 1 1172.500 483.500H1167Z" fill="#777"/><path d="M1160 485H1173V491Q1172 496 1166.500 496Q1161 496 1160 491Z" fill="#777"/>
    <text x="1166.500" y="494" text-anchor="middle" font-family="Open Sans" font-size="8.500" font-weight="bold" fill="#fff">2x</text>
  </svg>
</div>
</body>
</html>
